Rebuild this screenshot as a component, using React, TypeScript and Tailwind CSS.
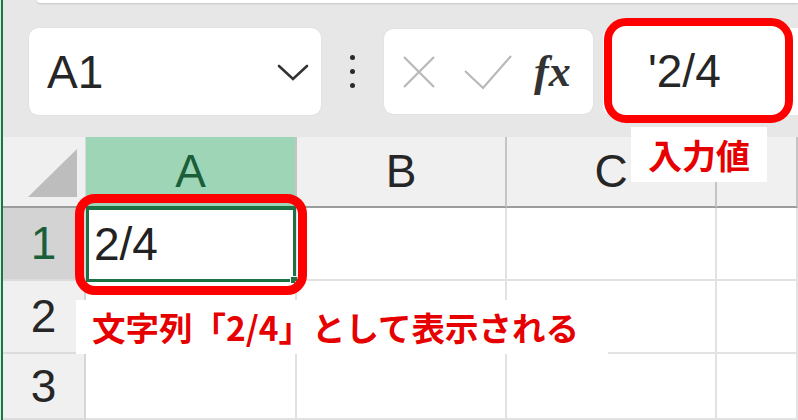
import React from 'react';

const font = { fontFamily: '"Liberation Sans", Arial, sans-serif' };
const jp = { fontFamily: '"Noto Sans CJK JP", "Noto Sans", sans-serif' };

const columns = [
  { name: 'A', width: 'w-[211px]', active: true },
  { name: 'B', width: 'w-[210px]', active: false },
  { name: 'C', width: 'w-[210px]', active: false },
  { name: '', width: 'flex-1', active: false },
];

const rows = [
  { n: '1', height: 'h-[73px]', active: true },
  { n: '2', height: 'h-[73px]', active: false },
  { n: '3', height: 'h-[66px]', active: false },
];

const App = () => {
  return (
    <div className="relative w-[798px] h-[420px] overflow-hidden flex bg-white" style={font}>
      {/* window edge */}
      <div className="w-[3px] flex">
        <div className="w-px bg-[#dfe9e3]" />
        <div className="flex-1 bg-[#107c41]" />
      </div>

      <div className="flex-1 flex flex-col">
        {/* formula bar */}
        <div className="h-[134px] bg-[#e7e7e7] flex flex-col">
          <div className="h-[3px] ml-[34px] bg-white rounded-bl-[6px] shadow-[0_1px_2px_rgba(0,0,0,0.15)]" />
          <div className="mt-[25px] flex items-center">
            <div className="ml-[26px] w-[292px] h-[87px] bg-white rounded-[9px] shadow-[0_0_1px_rgba(0,0,0,0.2)] flex items-center pl-[18px] pr-[12px]">
              <span className="text-[46px] text-[#262626] leading-none">A1</span>
              <svg className="ml-auto" width="32" height="18" viewBox="0 0 32 18">
                <path d="M2 3 L16 16 L30 3" fill="none" stroke="#333" strokeWidth="2.6" strokeLinecap="round" />
              </svg>
            </div>
            <div className="ml-[29px] flex flex-col gap-[9px]">
              <span className="w-[5px] h-[5px] rounded-full bg-[#2a2a2a]" />
              <span className="w-[5px] h-[5px] rounded-full bg-[#2a2a2a]" />
              <span className="w-[5px] h-[5px] rounded-full bg-[#2a2a2a]" />
            </div>
            <div className="ml-[29px] w-[209px] h-[85px] bg-white rounded-[9px] shadow-[0_0_1px_rgba(0,0,0,0.2)] flex items-center pl-[17px]">
              <svg width="36" height="36" viewBox="0 0 36 36">
                <path d="M3 3 L33 33 M33 3 L3 33" stroke="#b8b8b8" strokeWidth="2.2" />
              </svg>
              <svg className="ml-[27px]" width="48" height="36" viewBox="0 0 48 36">
                <path d="M1 17 L19 34 L47 2" fill="none" stroke="#b8b8b8" strokeWidth="2.2" />
              </svg>
              <span
                className="ml-[22px] text-[44px] italic font-bold leading-none text-[#333]"
                style={{ fontFamily: '"Liberation Serif", "DejaVu Serif", serif' }}
              >
                fx
              </span>
            </div>
            <div className="ml-[10px] flex-1 h-[87px] bg-white rounded-l-[9px]" />
          </div>
        </div>

        {/* column headers */}
        <div className="h-[74px] flex bg-[#e7e7e7] pt-[3px]">
          <div className="w-[83px] h-full flex bg-[#f0f0f0] border-b-2 border-[#9c9c9c] border-r border-r-[#dadada] items-end justify-end pr-[8px] pb-[9px]">
            <svg width="49" height="48" viewBox="0 0 49 48">
              <path d="M49 0 L49 48 L0 48 Z" fill="#bdbdbd" />
            </svg>
          </div>
          {columns.map((c) => (
            <div
              key={c.name + c.width}
              className={`${c.width} h-full flex items-center justify-center border-b-2 border-[#9c9c9c] border-r-2 border-r-[#c4c4c4] text-[46px] ${
                c.active ? 'bg-[#9fd5b7] text-[#1b5e3a] border-b-[#1e7145]' : 'bg-[#f0f0f0] text-[#262626]'
              }`}
            >
              {c.name}
            </div>
          ))}
        </div>

        {/* rows */}
        {rows.map((r) => (
          <div key={r.n} className={`${r.height} flex`}>
            <div
              className={`w-[83px] flex items-center justify-center border-b-2 border-[#dcdcdc] border-r-2 border-r-[#d6d6d6] text-[46px] ${
                r.active ? 'bg-[#d3d3d3] text-[#1b5e3a]' : 'bg-[#f0f0f0] text-[#262626]'
              }`}
            >
              {r.n}
            </div>
            {columns.map((c, i) => (
              <div
                key={c.name + c.width}
                className={`${c.width} relative border-b-2 border-[#e2e2e2] border-r-2 border-r-[#e2e2e2] flex items-center`}
              >
                {r.active && i === 0 && (
                  <>
                    <span className="pl-[8px] text-[46px] text-[#222] leading-none">2/4</span>
                    <div className="absolute left-0 top-[-1px] right-[-1px] bottom-[-3px] border-[3px] border-[#1e7145]" />
                    <div className="absolute right-[-3px] bottom-[-5px] w-[8px] h-[8px] bg-[#1e7145] border border-white" />
                  </>
                )}
              </div>
            ))}
          </div>
        ))}
      </div>

      {/* annotations */}
      <div className="absolute left-[604px] top-[18px] w-[189px] h-[105px] border-[8px] border-[#ff0000] rounded-[22px] bg-white flex items-center pl-[36px]">
        <span className="text-[46px] text-[#262626] leading-none">'2/4</span>
      </div>
      <div className="absolute left-[631px] top-[127px] w-[136px] h-[55px] bg-white flex items-center justify-center" style={jp}>
        <span className="text-[34px] font-bold text-[#e60000] leading-none">入力値</span>
      </div>
      <div className="absolute left-[75px] top-[194px] w-[232px] h-[101px] border-[9px] border-[#ff0000] rounded-[20px]" />
      <div className="absolute left-[76px] top-[300px] w-[532px] h-[54px] bg-white flex items-center pl-[16px]" style={jp}>
        <span className="text-[33.5px] font-bold text-[#e60000] leading-none">文字列「2/4」として表示される</span>
      </div>
    </div>
  );
};

export default App;
